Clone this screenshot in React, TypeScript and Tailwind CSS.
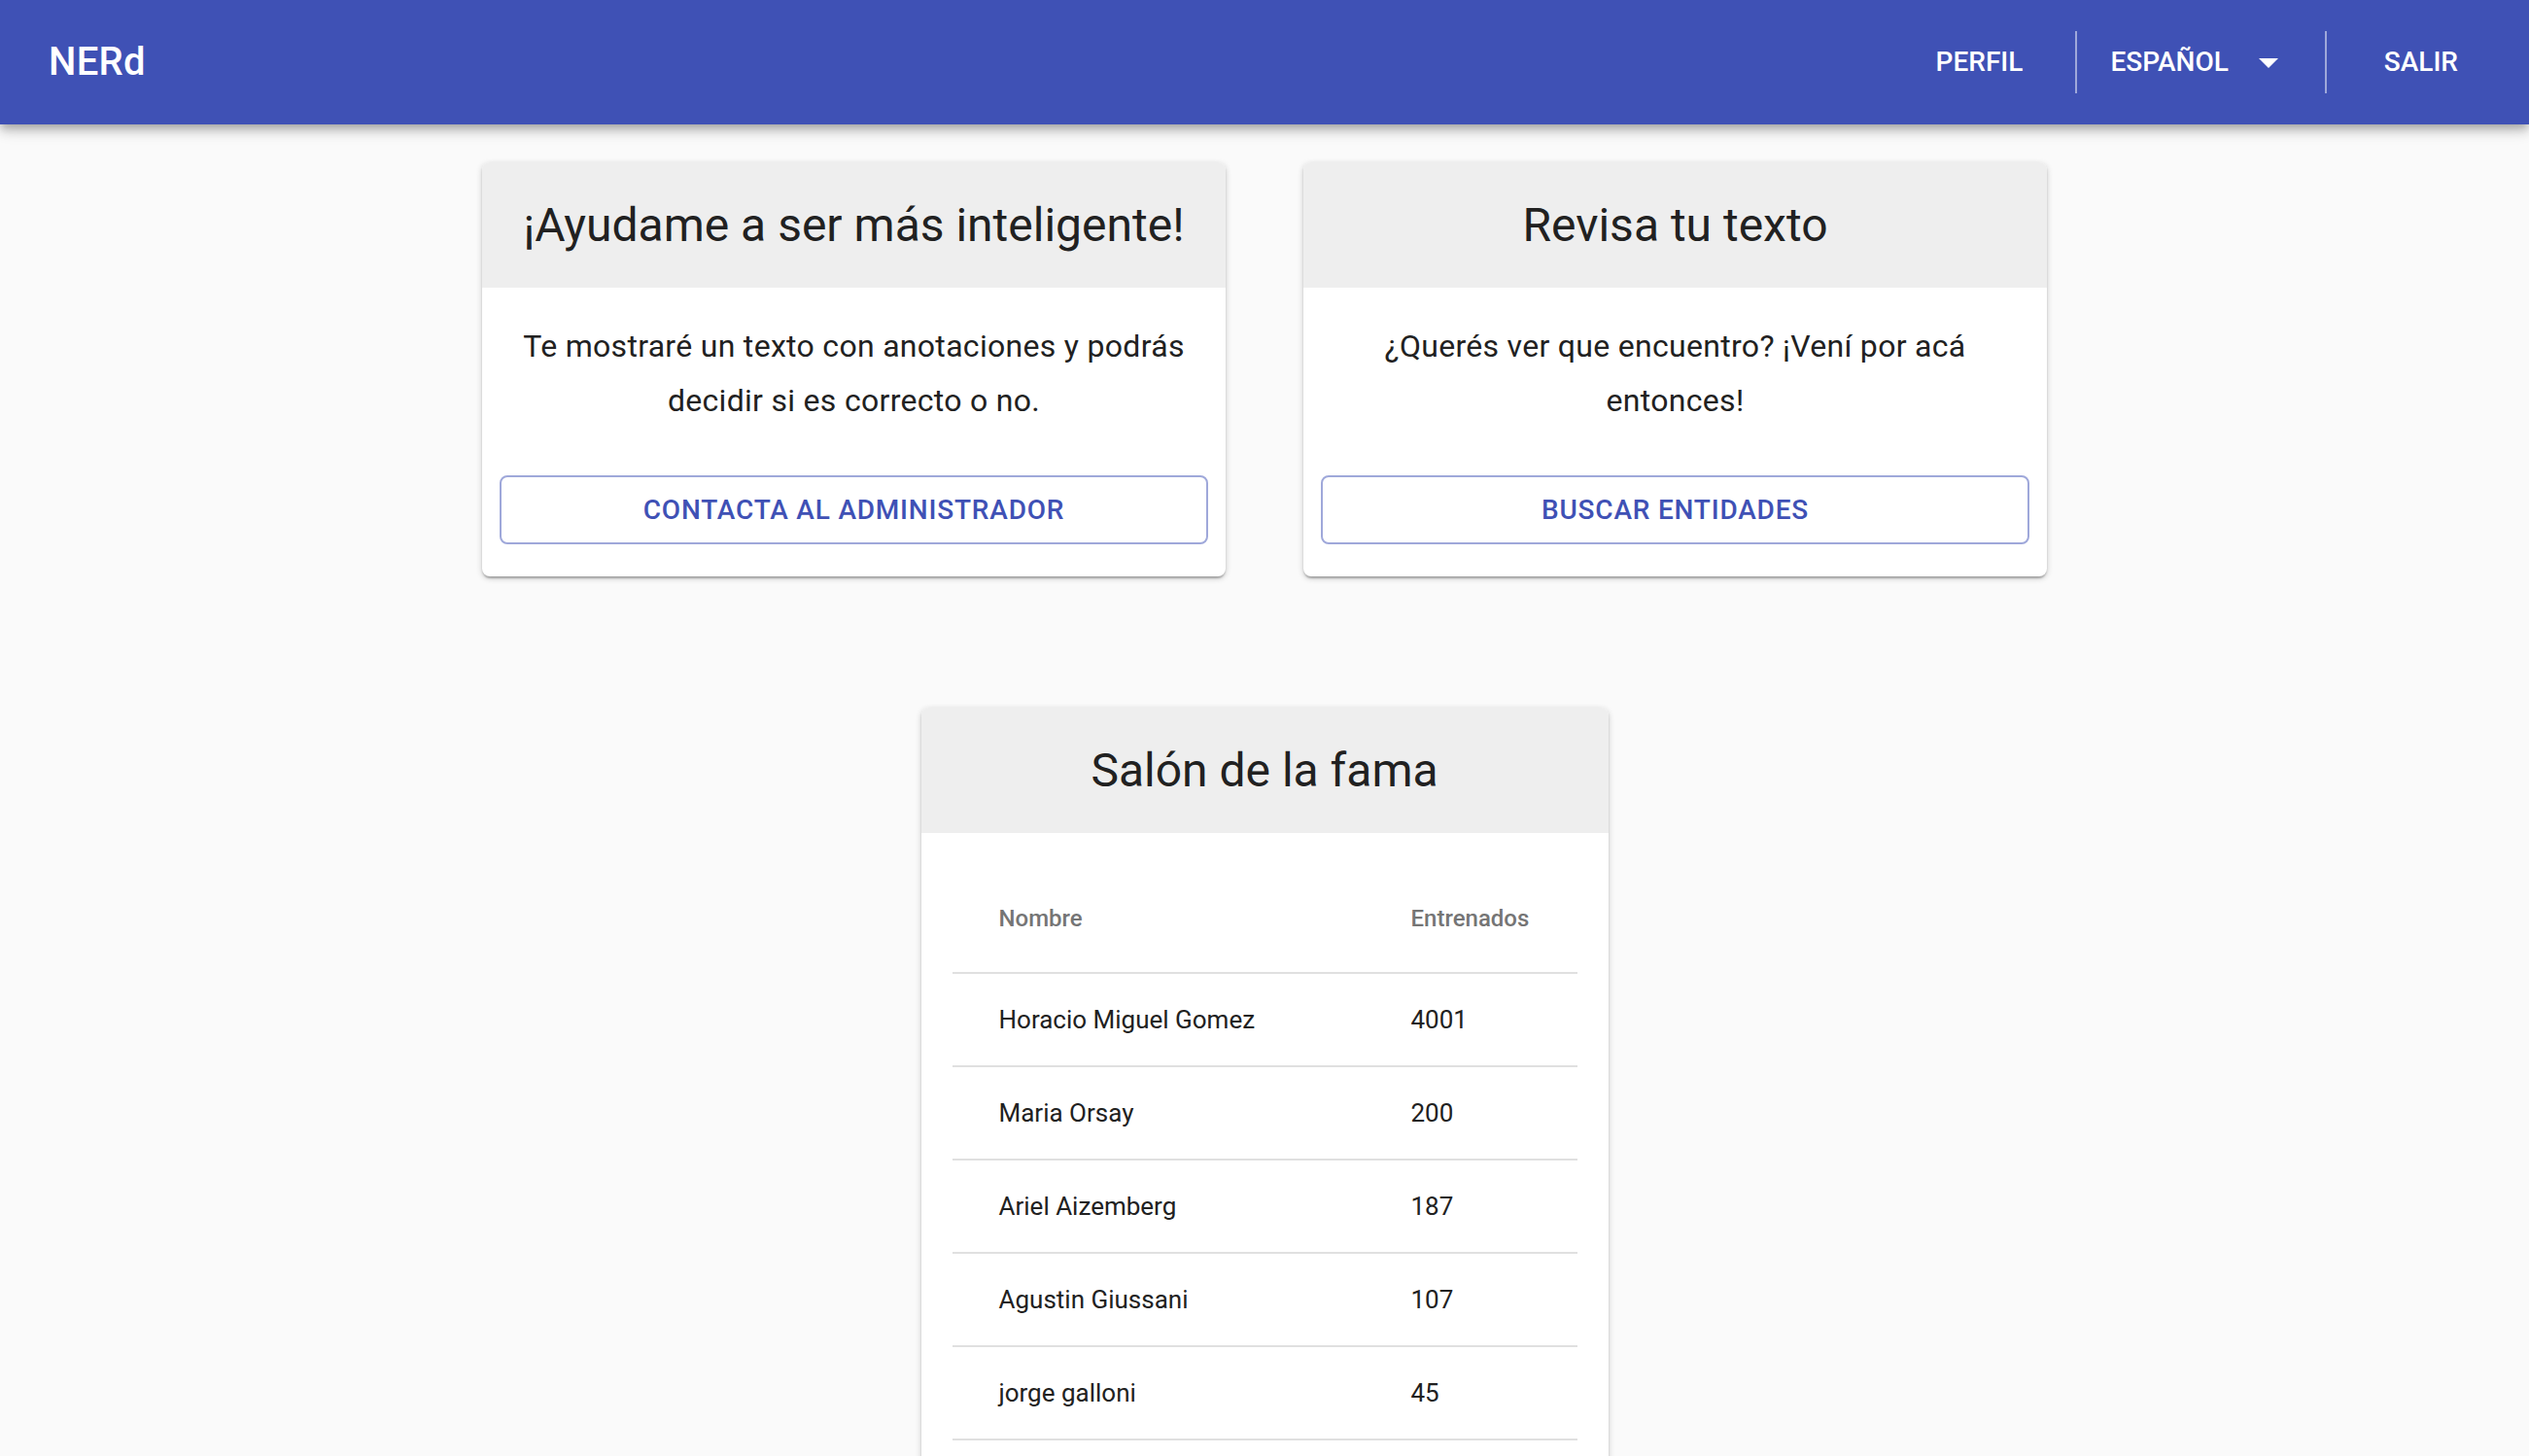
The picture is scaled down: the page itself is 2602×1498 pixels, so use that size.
import React from 'react';

const fame = [
  { name: 'Horacio Miguel Gomez', count: 4001 },
  { name: 'Maria Orsay', count: 200 },
  { name: 'Ariel Aizemberg', count: 187 },
  { name: 'Agustin Giussani', count: 107 },
  { name: 'jorge galloni', count: 45 },
];

const cardShadow =
  'shadow-[0_2px_6px_0_rgba(0,0,0,0.2),0_2px_2px_0_rgba(0,0,0,0.14),0_4px_2px_-2px_rgba(0,0,0,0.12)]';

interface ActionCardProps {
  title: string;
  text: string;
  action: string;
}

const ActionCard: React.FC<ActionCardProps> = ({ title, text, action }) => (
  <div className={`w-[765px] rounded-[8px] bg-white overflow-hidden ${cardShadow}`}>
    <div className="h-[129px] bg-[#eeeeee] flex items-center justify-center text-[48px] text-[#212121] leading-none">
      {title}
    </div>
    <div className="px-[32px] pt-[32px] pb-[49px] text-center text-[32px] leading-[56px] tracking-[0.3px] text-[#212121]">
      {text}
    </div>
    <div className="px-[18px] pb-[33px]">
      <button className="w-full h-[71px] rounded-[8px] border-2 border-[#9fa8da] text-[28px] font-medium tracking-[0.8px] text-[#3f51b5] uppercase">
        {action}
      </button>
    </div>
  </div>
);

export default function App() {
  return (
    <div className="min-h-screen bg-[#fafafa] font-['Roboto',sans-serif]">
      <header className="relative z-10 h-[128px] bg-[#3f51b5] flex items-center pl-[50px] pr-[73px] shadow-[0_4px_8px_-2px_rgba(0,0,0,0.2),0_8px_10px_0_rgba(0,0,0,0.14),0_2px_20px_0_rgba(0,0,0,0.12)]">
        <h6 className="text-[40px] font-medium text-white leading-none tracking-[0.3px]">NERd</h6>
        <div className="ml-auto flex items-center h-full text-white text-[28px] font-medium tracking-[0px] leading-none">
          <span>PERFIL</span>
          <div className="ml-[54px] w-[2px] h-[64px] bg-white/50" />
          <span className="ml-[34px]">ESPAÑOL</span>
          <svg className="ml-[17px] w-[48px] h-[48px]" viewBox="0 0 24 24" fill="white">
            <path d="M7 10l5 5 5-5z" />
          </svg>
          <div className="ml-[34px] w-[2px] h-[64px] bg-white/50" />
          <span className="ml-[59px]">SALIR</span>
        </div>
      </header>

      <main className="pt-[39px] pb-[40px]">
        <div className="flex justify-center gap-[80px]">
          <ActionCard
            title="¡Ayudame a ser más inteligente!"
            text="Te mostraré un texto con anotaciones y podrás decidir si es correcto o no."
            action="Contacta al administrador"
          />
          <ActionCard
            title="Revisa tu texto"
            text="¿Querés ver que encuentro? ¡Vení por acá entonces!"
            action="Buscar entidades"
          />
        </div>

        <div className={`mt-[135px] mx-auto w-[707px] rounded-[8px] bg-white overflow-hidden ${cardShadow}`}>
          <div className="h-[129px] bg-[#eeeeee] flex items-center justify-center text-[48px] text-[#212121] leading-none">
            Salón de la fama
          </div>
          <div className="px-[32px] pt-[33px] pb-[48px]">
            <div className="grid grid-cols-[424px_218px] h-[112px] items-center border-b-2 border-[#e0e0e0] text-[24px] font-medium text-[#757575]">
              <div className="pl-[48px]">Nombre</div>
              <div className="pl-[48px]">Entrenados</div>
            </div>
            {fame.map((row) => (
              <div
                key={row.name}
                className="grid grid-cols-[424px_218px] h-[96px] items-center border-b-2 border-[#e0e0e0] text-[26px] text-[#212121]"
              >
                <div className="pl-[48px]">{row.name}</div>
                <div className="pl-[48px]">{row.count}</div>
              </div>
            ))}
          </div>
        </div>
      </main>
    </div>
  );
}
